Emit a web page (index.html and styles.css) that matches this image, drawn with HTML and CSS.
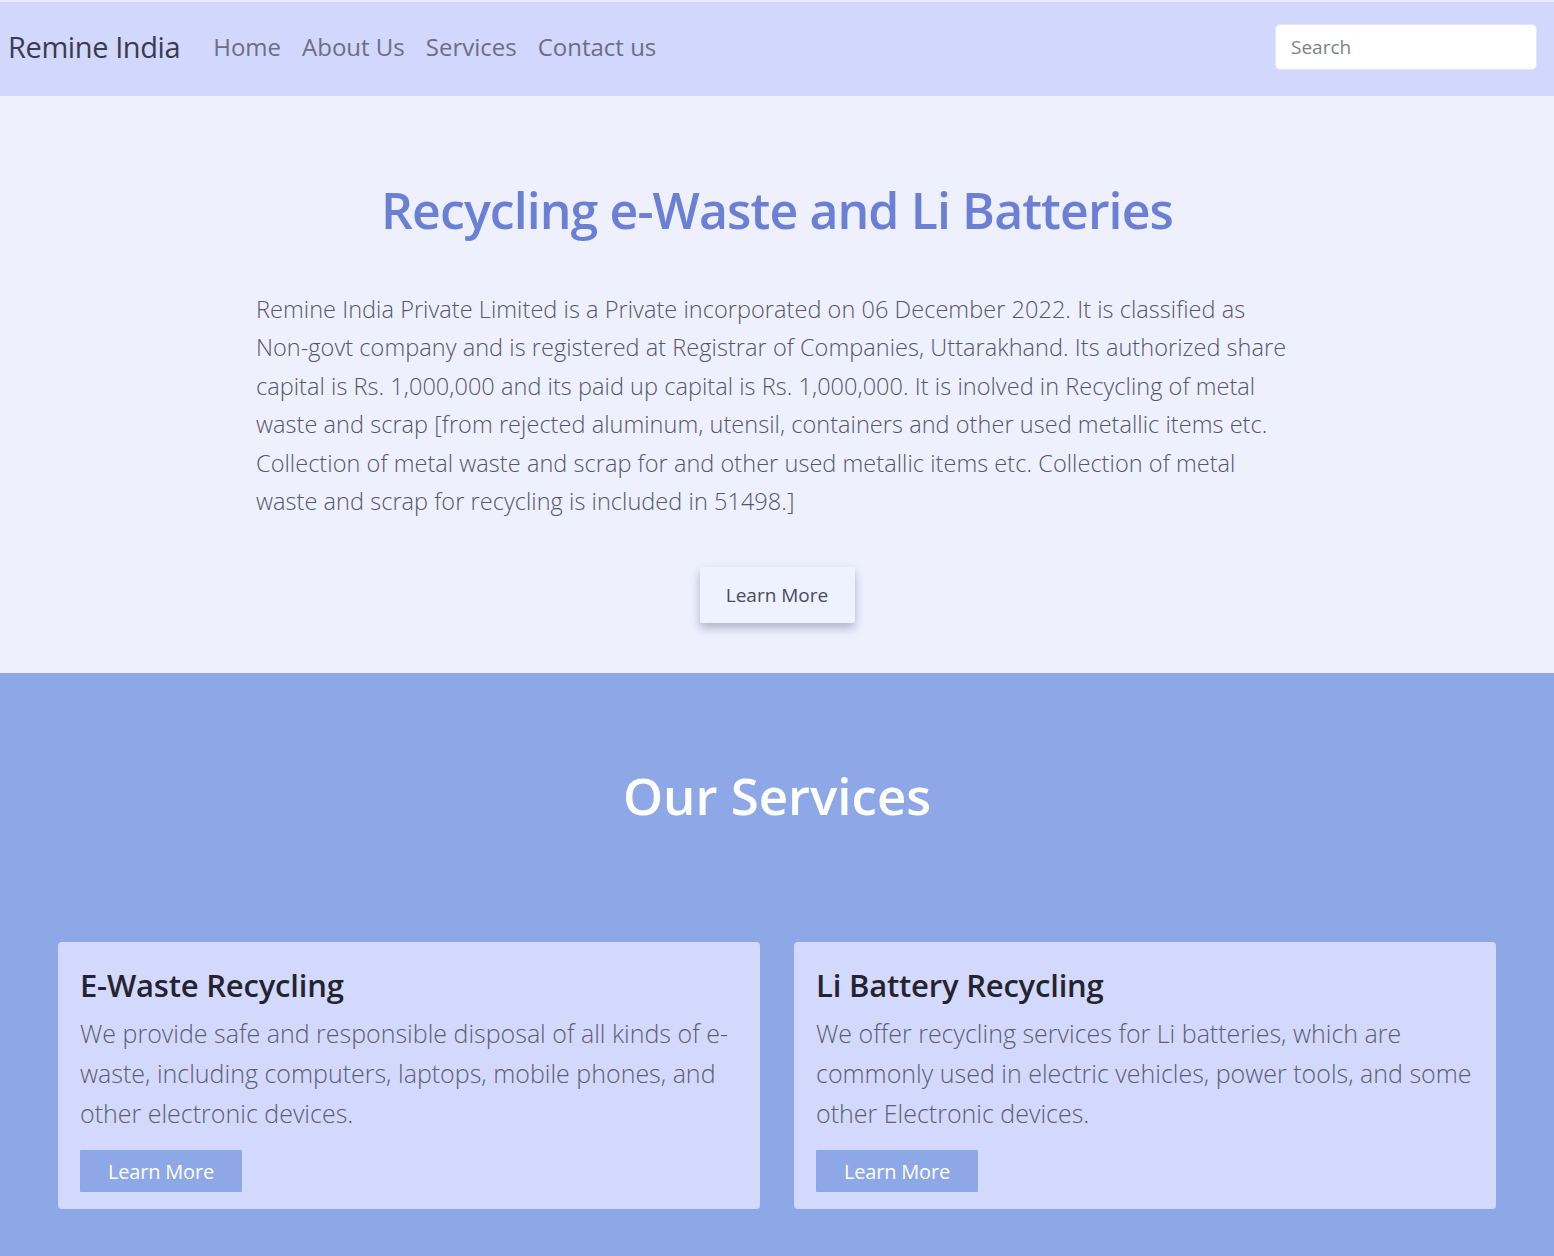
FILE: index.html
```html
<!DOCTYPE html>
<html lang="en">
<head>
<meta charset="utf-8">
<title>Remine India</title>
<link rel="stylesheet" href="styles.css">
</head>
<body>
<nav class="navbar">
  <div class="nav-left">
    <a class="brand" href="#">Remine India</a>
    <ul class="nav-links">
      <li><a href="#">Home</a></li>
      <li><a href="#">About Us</a></li>
      <li><a href="#">Services</a></li>
      <li><a href="#">Contact us</a></li>
    </ul>
  </div>
  <input class="search" type="text" placeholder="Search">
</nav>
<section class="hero">
  <h1 class="hero-title">Recycling e-Waste and Li Batteries</h1>
  <p class="hero-text">Remine India Private Limited is a Private incorporated on 06 December 2022. It is classified as Non-govt company and is registered at Registrar of Companies, Uttarakhand. Its authorized share capital is Rs. 1,000,000 and its paid up capital is Rs. 1,000,000. It is inolved in Recycling of metal waste and scrap [from rejected aluminum, utensil, containers and other used metallic items etc. Collection of metal waste and scrap for and other used metallic items etc. Collection of metal waste and scrap for recycling is included in 51498.]</p>
  <button class="hero-btn">Learn More</button>
</section>
<section class="services">
  <h2 class="services-title">Our Services</h2>
  <div class="cards">
    <div class="card">
      <h3 class="card-title">E-Waste Recycling</h3>
      <p class="card-text">We provide safe and responsible disposal of all kinds of e-waste, including computers, laptops, mobile phones, and other electronic devices.</p>
      <button class="card-btn">Learn More</button>
    </div>
    <div class="card">
      <h3 class="card-title">Li Battery Recycling</h3>
      <p class="card-text">We offer recycling services for Li batteries, which are commonly used in electric vehicles, power tools, and some other Electronic devices.</p>
      <button class="card-btn">Learn More</button>
    </div>
  </div>
</section>
</body>
</html>
```
FILE: styles.css
```css
* { box-sizing: border-box; }
html, body { margin: 0; padding: 0; }
body {
  font-family: "Open Sans", "Noto Sans", sans-serif;
  background: #8da7e7;
  color: #333;
}
.navbar {
  background: #d2d8fd;
  border-top: 2px solid #e9ecfe;
  height: 96px;
  display: flex;
  align-items: center;
  justify-content: space-between;
  padding: 0 17px 5px 8px;
}
.nav-left { display: flex; align-items: center; }
.brand {
  font-size: 29px;
  color: #3a3b4e;
  text-decoration: none;
  margin-right: 33px;
  letter-spacing: -0.4px;
}
.nav-links {
  list-style: none;
  margin: 0;
  padding: 0;
  display: flex;
  gap: 21px;
}
.nav-links a {
  font-size: 24px;
  color: #6b6e86;
  text-decoration: none;
}
.search {
  width: 262px;
  height: 46px;
  border: 1px solid #e3e6f5;
  border-radius: 5px;
  background: #fff;
  padding: 0 15px;
  font-family: inherit;
  font-size: 19px;
  color: #555;
}
.search::placeholder { color: #7d7f8c; }
.hero {
  background: #eef0fe;
  display: flex;
  flex-direction: column;
  align-items: center;
  height: 577px;
  padding-top: 79px;
}
.hero-title {
  margin: 0;
  font-size: 50px;
  font-weight: 600;
  color: #6b7fd4;
  letter-spacing: -0.9px;
  line-height: 70px;
}
.hero-text {
  width: 1042px;
  margin: 45px 0 0;
  font-size: 23.5px;
  line-height: 38.4px;
  color: #55566a;
  font-weight: 300;
  letter-spacing: 0.05px;
}
.hero-btn {
  margin-top: 47px;
  width: 155px;
  height: 56px;
  background: #eef1fe;
  border: none;
  border-radius: 2px;
  box-shadow: 0 5px 10px rgba(60, 64, 100, 0.35);
  font-family: inherit;
  font-size: 19px;
  color: #4a4b5c;
}
.services {
  background: #8da7e7;
  padding: 90px 58px 47px;
}
.services-title {
  margin: 0;
  text-align: center;
  color: #fff;
  font-size: 51px;
  font-weight: 600;
  line-height: 64px;
}
.cards {
  margin-top: 115px;
  display: grid;
  grid-template-columns: 1fr 1fr;
  gap: 34px;
}
.card {
  background: #d3d9fd;
  border-radius: 4px;
  padding: 22px 22px 17px;
}
.card-title {
  margin: 0;
  font-size: 31px;
  font-weight: 600;
  color: #23242f;
  letter-spacing: -0.2px;
  line-height: 42px;
}
.card-text {
  margin: 7px 0 0;
  font-size: 25px;
  line-height: 40px;
  color: #5c5e72;
  font-weight: 300;
}
.card-btn {
  margin-top: 17px;
  width: 162px;
  height: 42px;
  background: #8da7e7;
  border: none;
  border-radius: 1px;
  color: #fff;
  font-family: inherit;
  font-size: 20px;
  letter-spacing: -0.2px;
}
```
